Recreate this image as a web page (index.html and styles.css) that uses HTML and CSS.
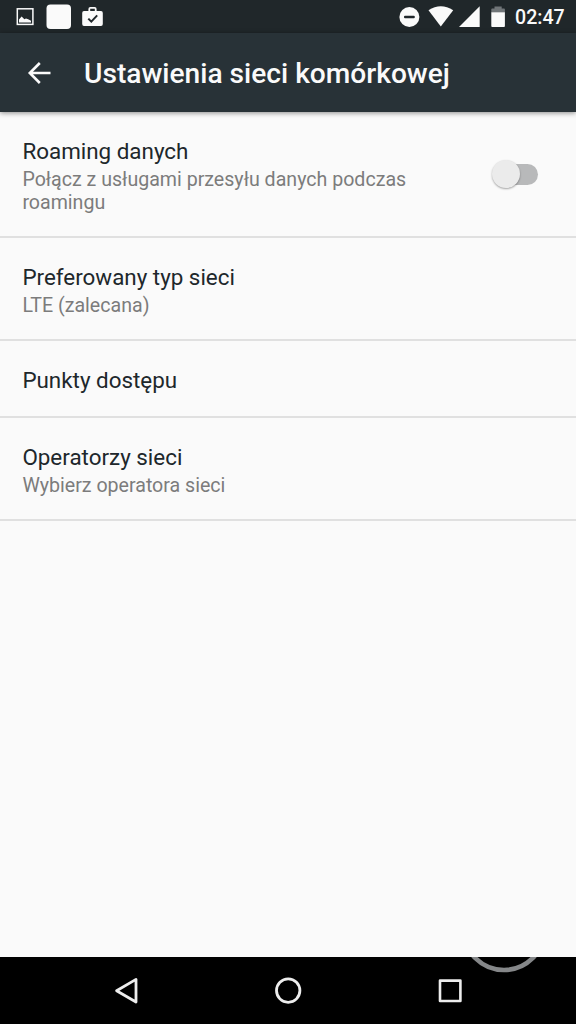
FILE: index.html
```html
<!DOCTYPE html>
<html lang="pl">
<head>
<meta charset="utf-8">
<title>Ustawienia sieci komórkowej</title>
<link rel="stylesheet" href="styles.css">
</head>
<body>
<div class="screen">
  <div class="statusbar">
    <svg class="status-icons" width="120" height="33" viewBox="0 0 120 33">
      <rect x="17.3" y="8.8" width="15.6" height="15.6" fill="none" stroke="#fafafa" stroke-width="1.5"/>
      <path d="M19 22.6V19.6L21.6 16.6L24.4 19.2L26 18.4L28.2 19.2L31 20.8V22.6Z" fill="#fafafa"/>
      <rect x="46.5" y="4.5" width="24.5" height="24.5" rx="4" fill="#fafafa"/>
      <path d="M84 11H88.4V9Q88.4 7 90.4 7H94.6Q96.6 7 96.6 9V11H101Q102.8 11 102.8 13V24Q102.8 26 101 26H84Q82.2 26 82.2 24V13Q82.2 11 84 11ZM90.2 11H94.8V8.7H90.2Z" fill="#fafafa" fill-rule="evenodd"/>
      <path d="M88.3 18.6L91.3 21.6L97.2 15.4" fill="none" stroke="#20272b" stroke-width="2"/>
    </svg>
    <svg class="status-icons" width="117" height="33" viewBox="390 0 117 33">
      <circle cx="409.4" cy="17" r="10" fill="#fafafa"/>
      <rect x="404" y="15.8" width="10.8" height="2.4" rx="1" fill="#20272b"/>
      <path d="M428.5 10.2Q440.8 2.2 453.2 10.2L440.8 26.4Z" fill="#fafafa"/>
      <path d="M459 27L479.7 6.2V27Z" fill="#fafafa"/>
      <path d="M491.3 12.4V9.2Q491.3 8.4 492.2 8.4H494.5V6.4H501.7V8.4H504Q504.9 8.4 504.9 9.2V12.4Z" fill="#707578"/>
      <path d="M491.3 12.3H504.9V26Q504.9 27 504 27H492.2Q491.3 27 491.3 26Z" fill="#fafafa"/>
    </svg>
    <span class="clock">02:47</span>
  </div>
  <header class="toolbar">
    <svg class="back" width="24" height="24" viewBox="0 0 24 24"><path d="M23.5 12H3M12.8 2L2.8 12L12.8 22" fill="none" stroke="#fafafa" stroke-width="2.6"/></svg>
    <h1 class="title">Ustawienia sieci komórkowej</h1>
  </header>
  <main class="list">
    <div class="row row-roaming">
      <div class="text">
        <div class="name">Roaming danych</div>
        <div class="summary">Połącz z usługami przesyłu danych podczas roamingu</div>
      </div>
      <div class="switch"><div class="thumb"></div></div>
    </div>
    <div class="row row-double">
      <div class="text">
        <div class="name">Preferowany typ sieci</div>
        <div class="summary">LTE (zalecana)</div>
      </div>
    </div>
    <div class="row row-single">
      <div class="text"><div class="name">Punkty dostępu</div></div>
    </div>
    <div class="row row-double">
      <div class="text">
        <div class="name">Operatorzy sieci</div>
        <div class="summary">Wybierz operatora sieci</div>
      </div>
    </div>
  </main>
  <nav class="navbar">
    <svg width="576" height="67" viewBox="0 957 576 67">
      <path d="M116.6 990.7L136 979.4V1002Z" fill="none" stroke="#ededed" stroke-width="2.8" stroke-linejoin="round"/>
      <circle cx="288.2" cy="990.6" r="11.7" fill="none" stroke="#ededed" stroke-width="2.8"/>
      <rect x="440" y="980.6" width="20.4" height="20.4" fill="none" stroke="#ededed" stroke-width="2.6" stroke-linejoin="round"/>
      <circle cx="504" cy="929.5" r="40.5" fill="none" stroke="#858789" stroke-width="4.6"/>
    </svg>
  </nav>
</div>
</body>
</html>
```
FILE: styles.css
```css
body {
  margin: 0;
  font-family: Roboto, "Noto Sans", sans-serif;
}
.screen {
  display: flex;
  flex-direction: column;
  width: 576px;
  height: 1024px;
  background: #fafafa;
  overflow: hidden;
}
.statusbar {
  display: flex;
  flex: none;
  height: 33px;
  background: #20272a;
}
.status-icons {
  display: block;
}
.status-icons + .status-icons {
  margin-left: 270px;
}
.clock {
  margin-left: 8px;
  font-size: 19.6px;
  line-height: 35px;
  font-weight: 500;
  color: #fafafa;
}
.toolbar {
  display: flex;
  flex: none;
  align-items: center;
  height: 79px;
  box-sizing: border-box;
  padding-left: 27px;
  background: #283237;
  box-shadow: 0 1px 5px rgba(0, 0, 0, .45);
}
.back {
  display: block;
}
.title {
  margin: 2px 0 0 33px;
  font-size: 28.15px;
  line-height: 34px;
  font-weight: 500;
  color: #fafafa;
  white-space: nowrap;
}
.list {
  flex: 1;
}
.row {
  display: flex;
  justify-content: space-between;
  box-sizing: border-box;
  padding: 26px 38px 0 22.4px;
  border-bottom: 2px solid #e0e0e0;
}
.row-roaming {
  height: 126px;
}
.row-double {
  height: 103px;
}
.row-single {
  height: 77px;
}
.name {
  font-size: 22.4px;
  line-height: 26px;
  color: #20272b;
}
.summary {
  max-width: 420px;
  margin-top: 4px;
  font-size: 19.6px;
  line-height: 23px;
  color: #7c7c7c;
}
.switch {
  width: 36px;
  height: 21px;
  margin-top: 26px;
  border-radius: 10.5px;
  background: #b8b9ba;
}
.thumb {
  width: 28px;
  height: 28px;
  margin: -4px 0 0 -10px;
  border-radius: 50%;
  background: #ebebeb;
  box-shadow: 0 1px 2px rgba(0, 0, 0, .35);
}
.navbar {
  flex: none;
  height: 67px;
  background: #000;
}
.navbar svg {
  display: block;
}
```
